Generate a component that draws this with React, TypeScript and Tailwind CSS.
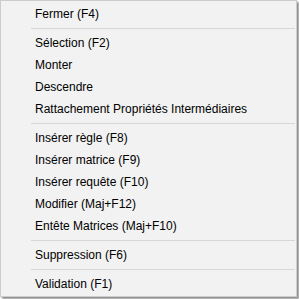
const items: (string | null)[] = [
  "Fermer (F4)",
  null,
  "Sélection (F2)",
  "Monter",
  "Descendre",
  "Rattachement Propriétés Intermédiaires",
  null,
  "Insérer règle (F8)",
  "Insérer matrice (F9)",
  "Insérer requête (F10)",
  "Modifier (Maj+F12)",
  "Entête Matrices (Maj+F10)",
  null,
  "Suppression (F6)",
  null,
  "Validation (F1)",
];

export default function App() {
  return (
    <div className="w-[299px] h-[299px] bg-white">
      <div className="w-[297px] h-[297px] border border-[#cccccc] bg-[#f2f2f2] pt-[2px] shadow-[2px_2px_2px_rgba(0,0,0,0.45)] font-['Liberation_Sans',sans-serif] text-[12px] text-black">
        {items.map((item, i) =>
          item === null ? (
            <div key={i} className="h-[7px] flex items-center pl-[30px] pr-[1px]">
              <div className="h-px w-full bg-[#d7d7d7]" />
            </div>
          ) : (
            <div key={i} className="h-[22px] flex items-center pl-[34px] leading-none">
              {item}
            </div>
          )
        )}
      </div>
    </div>
  );
}
